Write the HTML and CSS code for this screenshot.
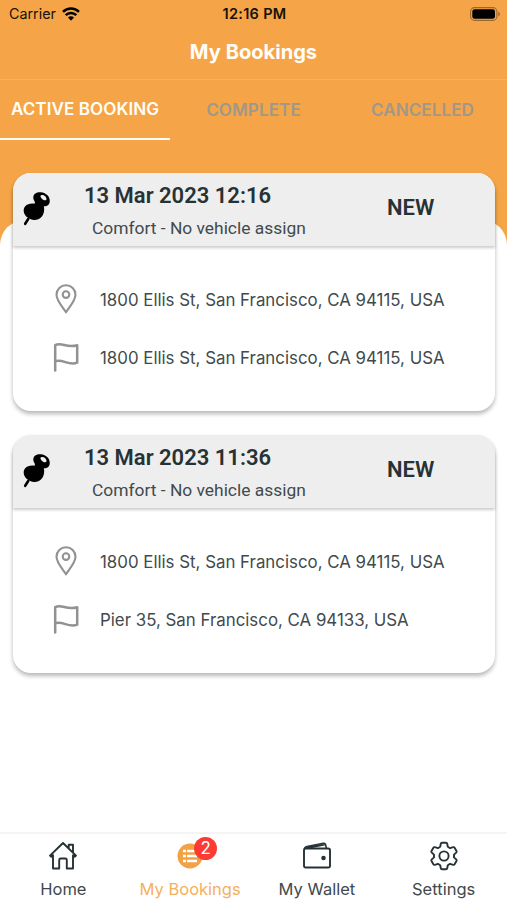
FILE: index.html
```html
<!DOCTYPE html>
<html lang="en">
<head>
<meta charset="utf-8">
<title>My Bookings</title>
<link rel="stylesheet" href="styles.css">
</head>
<body>
<svg class="defs" width="0" height="0" aria-hidden="true">
  <symbol id="pushpin" viewBox="0 0 28 36">
    <path d="M5.200 27L2.200 31.800" fill="none" stroke="#000" stroke-width="2.600" stroke-linecap="round"/>
    <path d="M10.800 8C9.200 4 11.500.3 16.500.3c4.500 0 8 2 9.500 5.200 1.200 2.700 1 5.700-.8 7.500-1.200 1.100-3 1.400-4.400 1.200 1.200 5.200-.3 10.300-4.900 12.800-4.300 2-9.300.8-12.400-2.200C.3 21.700-.2 17 2.200 14.300c2-2.300 6-3.300 9.300-2.500.9-1.100.2-2.500-.7-3.800z" fill="#000"/>
    <path d="M18 3.200c2.500-.8 5.800 1.700 5.500 4-.6 1.700-3 1-4.400-.3-1.400-1.300-2.300-3.100-1.100-3.700z" fill="#efefef"/>
  </symbol>
  <symbol id="place" viewBox="0 0 22 30">
    <path d="M11 28.300C8.500 24 1.500 17 1.500 10.800a9.500 9.500 0 0 1 19 0C20.500 17 13.500 24 11 28.300z"/>
    <circle cx="11" cy="10.600" r="3.300"/>
  </symbol>
  <symbol id="flag" viewBox="0 0 26 30">
    <path d="M2.200 28.500V3.200C8.500-.5 13.500 6.500 24.200 3.200v17.500c-8.600 3.600-14.200-4.200-22-1.500"/>
  </symbol>
</svg>

<header class="top">
  <div class="status">
    <span class="carrier">Carrier
      <svg width="18" height="14" viewBox="0 0 18 14"><g fill="none" stroke="#000" stroke-width="2.500"><path d="M1 4.800a11.600 11.600 0 0 1 16 0"/><path d="M3.700 8.200a7.600 7.600 0 0 1 10.600 0"/></g><path d="M9 13.800l-3-3.200a4.200 4.200 0 0 1 6 0z"/></svg>
    </span>
    <span class="clock">12:16 PM</span>
    <svg class="battery" width="31" height="14" viewBox="0 0 31 14"><rect x=".6" y=".6" width="26.300" height="12.800" rx="4" fill="none" stroke="#9a672c" stroke-width="1.100"/><rect x="2.300" y="2.300" width="22.700" height="9.400" rx="2.300"/><path d="M28.300 4.500q3.300 2.500 0 5z" fill="#9a672c"/></svg>
  </div>
  <h1>My Bookings</h1>
  <nav class="tabs">
    <a class="tab active">ACTIVE BOOKING</a>
    <a class="tab">COMPLETE</a>
    <a class="tab">CANCELLED</a>
  </nav>
</header>

<main class="sheet">
  <article class="card">
    <div class="card-head">
      <svg class="pushpin" width="28" height="36"><use href="#pushpin"/></svg>
      <div class="info">
        <h2>13 Mar 2023 12:16</h2>
        <p>Comfort - No vehicle assign</p>
      </div>
      <strong>NEW</strong>
    </div>
    <div class="route">
      <div class="stop"><svg class="line" width="22" height="30"><use href="#place"/></svg><span>1800 Ellis St, San Francisco, CA 94115, USA</span></div>
      <div class="stop"><svg class="line flag" width="26" height="30"><use href="#flag"/></svg><span>1800 Ellis St, San Francisco, CA 94115, USA</span></div>
    </div>
  </article>
  <article class="card">
    <div class="card-head">
      <svg class="pushpin" width="28" height="36"><use href="#pushpin"/></svg>
      <div class="info">
        <h2>13 Mar 2023 11:36</h2>
        <p>Comfort - No vehicle assign</p>
      </div>
      <strong>NEW</strong>
    </div>
    <div class="route">
      <div class="stop"><svg class="line" width="22" height="30"><use href="#place"/></svg><span>1800 Ellis St, San Francisco, CA 94115, USA</span></div>
      <div class="stop"><svg class="line flag" width="26" height="30"><use href="#flag"/></svg><span>Pier 35, San Francisco, CA 94133, USA</span></div>
    </div>
  </article>
</main>

<nav class="bottom">
  <a class="item">
    <svg class="glyph" viewBox="0 0 30 30"><path d="M2 14.600L15 2l13 12.600-1.300 1.200-1.700-1.500V27.500h-6.200V19q0-1.500-1.500-1.500h-4.600q-1.500 0-1.500 1.500v8.500H5V14.300l-1.700 1.500zM20.700 7V3.700H25v7.500"/></svg>
    <span>Home</span>
  </a>
  <a class="item current">
    <span class="list-icon">
      <svg width="26" height="26" viewBox="0 0 26 26"><circle cx="13" cy="13" r="12.500" fill="#f2a145"/><path d="M6 8h3M6 13h3M6 18h3M10 8h10M10 13h10M10 18h10" stroke="#fff" stroke-width="2.500"/></svg>
      <b class="badge">2</b>
    </span>
    <span>My Bookings</span>
  </a>
  <a class="item">
    <svg class="glyph" viewBox="0 0 30 30"><rect x="2" y="7.500" width="26" height="19" rx="1.800"/><path d="M2.500 8Q2.500 6.200 5 5.600L21.500 2.300q1.500-.3 1.900 1l1 4M5 7.300l17.500-3.500" stroke-width="1.600"/><circle cx="21.500" cy="17" r="1.300" fill="#263235"/></svg>
    <span>My Wallet</span>
  </a>
  <a class="item">
    <svg class="glyph" viewBox="0 0 30 30"><path d="M13 1.800h4q1 0 1.200 1l.6 3 2.300 1.400 3-1q1-.3 1.500.5l1.900 3.300q.5.900-.3 1.600L25 13.600v2.800l2.200 2q.8.700.3 1.600l-1.900 3.300q-.5.800-1.500.5l-3-1-2.300 1.400-.6 3q-.2 1-1.200 1h-4q-1 0-1.200-1l-.6-3-2.300-1.400-3 1q-1 .3-1.500-.5L2.500 20q-.5-.9.300-1.600l2.200-2v-2.800l-2.200-2q-.8-.7-.3-1.600l1.900-3.300q.5-.8 1.500-.5l3 1 2.300-1.400.6-3q.2-1 1.200-1z"/><circle cx="15" cy="15" r="4.600"/></svg>
    <span>Settings</span>
  </a>
</nav>
</body>
</html>
```

FILE: styles.css
```css
* { box-sizing: border-box; }
body {
  margin: 0;
  height: 900px;
  display: flex;
  flex-direction: column;
  overflow: hidden;
  background: #f5a547;
  font-family: Inter, "Liberation Sans", sans-serif;
  color: #263235;
}
h1, h2, p { margin: 0; }
svg { display: block; flex: none; }
.defs { position: absolute; }

.top { height: 220px; flex: none; }
.status {
  height: 27px;
  display: grid;
  grid-template-columns: 1fr auto 1fr;
  align-items: center;
  padding: 0 7px 0 9px;
  color: #16110a;
}
.carrier { display: flex; align-items: center; gap: 6px; font-size: 14.3px; }
.clock { font-size: 14.5px; font-weight: 600; letter-spacing: 0.3px; }
.battery { justify-self: end; margin-right: -1px; }
h1 {
  height: 53px;
  line-height: 51px;
  border-bottom: 1px solid #f4b264;
  color: #fffdf8;
  text-align: center;
  font-size: 20.1px;
  font-weight: 700;
}
.tabs { display: grid; grid-template-columns: repeat(3, 1fr); height: 61px; }
.tab {
  line-height: 60px;
  text-align: center;
  font-size: 17.1px;
  font-weight: 600;
  letter-spacing: 0.05px;
  color: #a09888;
}
.tab.active { height: 60px; line-height: 57px; color: #fffdf8; border-bottom: 2px solid #fffdf8; margin-right: -1px; }

.sheet {
  flex: 1;
  background: #fff;
  border-radius: 25px 25px 0 0;
  padding: 0 12px 0 13px;
  display: flex;
  flex-direction: column;
  gap: 24px;
}
.card {
  height: 238px;
  flex: none;
  background: #fff;
  border-radius: 18px;
  box-shadow: 0 3px 4px rgba(0, 0, 0, 0.28);
}
.card:first-child { margin-top: -47px; }
.card-head {
  height: 73px;
  display: flex;
  background: #eee;
  border-radius: 18px 18px 0 0;
  box-shadow: 0 2px 3px rgba(0, 0, 0, 0.2);
  font-family: Roboto, sans-serif;
}
.pushpin { margin: 19px 0 0 10px; }
.info { width: 303px; padding: 9px 0 0 33px; }
h2 { font-size: 22px; line-height: 27px; font-weight: 600; white-space: nowrap; }
.info p { font-size: 17.4px; line-height: 24px; margin: 7px 0 0 8px; color: #414a4c; white-space: nowrap; }
.card-head strong { margin-left: 33px; font-size: 22px; line-height: 70px; font-weight: 600; }
.route { padding: 24px 0 0 38px; }
.stop {
  height: 58px;
  display: grid;
  grid-template-columns: 30px 1fr;
  column-gap: 19px;
  align-items: center;
  font-size: 16.85px;
  color: #414a4c;
}
.stop span { padding-top: 2px; }
.line { justify-self: center; fill: none; stroke: #929292; stroke-width: 2.1; stroke-linejoin: round; stroke-linecap: round; }
.flag { stroke-width: 2.5; }

.bottom {
  height: 68px;
  flex: none;
  display: grid;
  grid-template-columns: repeat(4, 1fr);
  background: #fff;
  border-top: 2px solid #f4f4f4;
}
.item { display: flex; flex-direction: column; align-items: center; padding-top: 7px; color: #41494c; font-size: 16.5px; line-height: 22px; white-space: nowrap; }
.item > span:last-child { margin-top: 7px; }
.glyph { width: 30px; height: 30px; fill: none; stroke: #263235; stroke-width: 1.9; stroke-linejoin: round; }
.current { color: #f5b05d; }
.list-icon { position: relative; width: 26px; height: 30px; padding-top: 2px; }
.badge {
  position: absolute;
  left: 17px;
  top: -4px;
  width: 23px;
  height: 23px;
  border-radius: 50%;
  background: #fb3b34;
  color: #fff;
  text-align: center;
  font-size: 17px;
  line-height: 23px;
  font-weight: 400;
}
```
